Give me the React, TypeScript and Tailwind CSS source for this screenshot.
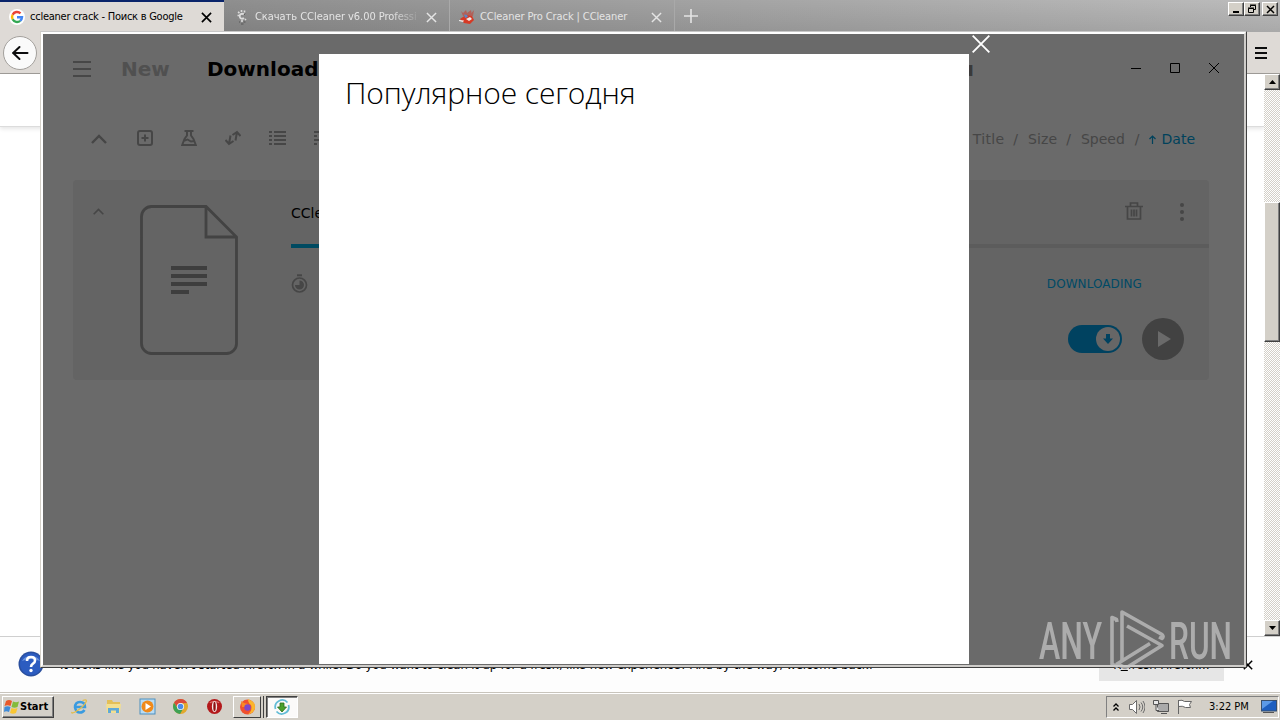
import type { ReactNode } from "react";
import { clsx } from "clsx";

const TAHOMA = "font-['DejaVu_Sans_Condensed','DejaVu_Sans',sans-serif]";

interface IconProps {
  className?: string;
}

function CloseGlyph({ className }: IconProps) {
  return (
    <svg className={className} viewBox="0 0 12 12" fill="none" stroke="currentColor">
      <path d="M1 1l10 10M11 1L1 11" />
    </svg>
  );
}

function ChevronUp({ className }: IconProps) {
  return (
    <svg className={className} viewBox="0 0 16 10" fill="none" stroke="currentColor" strokeWidth="2.4">
      <path d="M1 9l7-7 7 7" />
    </svg>
  );
}

function GoogleIcon() {
  return (
    <svg className="size-4 shrink-0" viewBox="0 0 16 16">
      <circle cx="8" cy="8" r="8" fill="#fff" />
      <g fill="none" strokeWidth="2.4">
        <path d="M11.5 4.3A5 5 0 0 0 3.6 5.7" stroke="#ea4335" />
        <path d="M3.6 5.7a5 5 0 0 0 0 4.6" stroke="#fbbc05" />
        <path d="M3.6 10.3a5 5 0 0 0 7.6 1.5" stroke="#34a853" />
        <path d="M11.2 11.8A5 5 0 0 0 13 8.2H8" stroke="#4285f4" />
      </g>
    </svg>
  );
}

function GearIcon() {
  return (
    <svg className="size-4 shrink-0" viewBox="0 0 16 16" fill="none" stroke="#dcdcdc">
      <path d="M10 5.5A2.500 2.500 0 1 0 10 9" strokeWidth="1.8" />
      <path d="M7.500 1v2M4 3l1.500 1M3.500 6.500h2M10.500 1.500v2M8 11v2M11 10l1 1" strokeWidth="1.6" />
      <path d="M11 4.500l-1 1.500" stroke="#555" />
      <path d="M5 13h1M9.500 13h2M7 15h2.500" stroke="#666" strokeWidth="1.4" />
    </svg>
  );
}

function CCleanerIcon() {
  return (
    <svg className="size-4 shrink-0" viewBox="0 0 16 16">
      <path d="M2 2l2 2 3-3 1 3 4-3 .500 3L15 1l-1 6-4 2-6-2z" fill="#b0625a" />
      <path d="M1 10l6-4 6 1 2 4-4 4-6-1z" fill="#d63a25" />
      <path d="M7 10l4-2 2 2-3 2z" fill="#f2e9e6" />
      <path d="M5 5.500l3 .500 1 2-3 1z" fill="#5d86c4" />
      <path d="M0 11l5 .500L4 13l-4-1z" fill="#efefef" />
    </svg>
  );
}

interface TabProps {
  icon: ReactNode;
  title: string;
  titleClass: string;
  active?: boolean;
}

function BrowserTab({ icon, title, titleClass, active }: TabProps) {
  return (
    <div
      className={clsx(
        "flex h-full shrink-0 items-center pl-[9px]",
        active
          ? "mr-px w-[224px] border-t-2 border-[#0a246a] bg-[#dedad6] text-black"
          : "w-[225px] border-r border-[#a9a9a9] pt-[2px] text-[#e4e4e4]"
      )}
    >
      {icon}
      <span
        className={clsx(
          "ml-[5px] h-4 overflow-hidden whitespace-nowrap text-[11px] leading-4",
          titleClass
        )}
      >
        {title}
      </span>
      <CloseGlyph
        className={clsx(
          "ml-auto size-[11px]",
          active ? "mr-3 stroke-[1.8]" : "mr-3 stroke-[1.6]"
        )}
      />
    </div>
  );
}

function CaptionButton({ children }: { children: ReactNode }) {
  return (
    <div className="flex h-[14px] w-4 items-center justify-center border border-t-white border-l-white border-r-[#404040] border-b-[#404040] bg-[#d4d0c8] shadow-[inset_-1px_-1px_0_#808080]">
      {children}
    </div>
  );
}

function TabBar() {
  return (
    <div className="flex h-8 shrink-0 bg-[linear-gradient(to_bottom,rgba(0,0,0,0),rgba(0,0,0,0.1)),linear-gradient(to_right,#858585,#bcbcbc)]">
      <BrowserTab
        active
        icon={<GoogleIcon />}
        title="ccleaner crack - Поиск в Google"
        titleClass="w-[158px] tracking-[-0.25px]"
      />
      <BrowserTab
        icon={<GearIcon />}
        title="Скачать CCleaner v6.00 Professi"
        titleClass="w-[167px] tracking-[-0.05px] [mask-image:linear-gradient(to_right,#000_82%,transparent)]"
      />
      <BrowserTab
        icon={<CCleanerIcon />}
        title="CCleaner Pro Crack | CCleaner"
        titleClass="w-[166px] tracking-[-0.1px]"
      />
      <svg className="ml-[9px] mt-[9px] size-[14px]" viewBox="0 0 14 14" stroke="#e4e4e4" strokeWidth="1.6">
        <path d="M7 0v14M0 7h14" />
      </svg>
      <div className="ml-auto mr-[2px] mt-[2px] flex">
        <CaptionButton>
          <svg className="size-[10px]" viewBox="0 0 10 10">
            <path d="M2 7h6v2H2z" />
          </svg>
        </CaptionButton>
        <CaptionButton>
          <svg className="size-[10px]" viewBox="0 0 10 10" fill="none" stroke="#000">
            <path d="M3.5 3V1.5h5v4H7M3 1h6M1.5 4.5h5v4h-5zM1 4h6" />
          </svg>
        </CaptionButton>
        <div className="w-[2px]" />
        <CaptionButton>
          <svg className="size-[9px]" viewBox="0 0 9 9" stroke="#000" strokeWidth="1.5">
            <path d="M1 1l7 7M8 1L1 8" />
          </svg>
        </CaptionButton>
      </div>
    </div>
  );
}

function NavBar() {
  return (
    <div className="flex h-[42px] shrink-0 items-center justify-between border-b border-[#9f9c98] bg-[#dedad6] pl-[3px] pr-[13px]">
      <div className="flex size-[34px] items-center justify-center rounded-full border border-[#a3a09c] bg-[#fafafa]">
        <svg className="size-[18px]" viewBox="0 0 18 18" fill="none" stroke="#0c0c0d" strokeWidth="2">
          <path d="M16.500 9H2M8.500 3L2.2 9l6.300 6" strokeLinecap="round" strokeLinejoin="round" />
        </svg>
      </div>
      <svg className="h-3 w-3" viewBox="0 0 12 12" fill="#0c0c0d">
        <path d="M0 0h12v2H0zM0 5h12v2H0zM0 10h12v2H0z" />
      </svg>
    </div>
  );
}

function ScrollButton({ down }: { down?: boolean }) {
  return (
    <div className="flex size-4 items-center justify-center border border-t-white border-l-white border-r-[#404040] border-b-[#404040] bg-[#d4d0c8] shadow-[inset_-1px_-1px_0_#808080]">
      <svg className="h-1 w-[7px]" viewBox="0 0 7 4">
        <path d={down ? "M0 0h7L3.500 4z" : "M0 4h7L3.500 0z"} />
      </svg>
    </div>
  );
}

function Page() {
  return (
    <div className="flex h-[562px] shrink-0 bg-white">
      <div className="flex-1">
        <div className="h-[53px] border-b border-[#dcdcdc] shadow-[0_2px_4px_rgba(0,0,0,0.1)]" />
      </div>
      <div className="flex w-4 flex-col bg-[repeating-conic-gradient(#d4d0c8_0_25%,#fff_0_50%)] bg-[length:2px_2px]">
        <ScrollButton />
        <div className="mt-[112px] h-[140px] border border-t-white border-l-white border-r-[#404040] border-b-[#404040] bg-[#d4d0c8] shadow-[inset_-1px_-1px_0_#808080]" />
        <div className="flex-1" />
        <ScrollButton down />
      </div>
    </div>
  );
}

function InfoBar() {
  return (
    <div className="flex h-14 shrink-0 items-start border-t border-[#cfcfcf] bg-[#fdfdfd] text-[13px]">
      <svg className="ml-[18px] mt-[14px] size-[26px] shrink-0" viewBox="0 0 26 26">
        <circle cx="13" cy="13" r="12.500" fill="#2a4f9e" />
        <circle cx="13" cy="13" r="11" fill="#2c5cc0" />
        <path d="M4 10a10 9 0 0 1 18 0q-9-4-18 0z" fill="#6f95dc" />
        <path d="M9 10q0-4 4-4t4 3.500q0 2-2 3.200T13 16" fill="none" stroke="#fff" strokeWidth="2.600" />
        <circle cx="13" cy="19.500" r="1.700" fill="#fff" />
      </svg>
      <span className="ml-4 mt-5 w-[830px] shrink-0 whitespace-nowrap leading-4 tracking-[-0.14px]">
        It looks like you haven't started Firefox in a while. Do you want to clean it up for a fresh, like-new
        experience? And by the way, welcome back!
      </span>
      <div className="ml-[209px] mt-4 h-7 w-[125px] shrink-0 whitespace-nowrap bg-[#e6e6e6] pt-1 text-center leading-4 tracking-[-0.1px]">
        R<u>e</u>fresh Firefox…
      </div>
      <CloseGlyph className="ml-[19px] mt-[23px] size-[10px] shrink-0 stroke-[1.800]" />
    </div>
  );
}

function WindowControls() {
  return (
    <div className="mt-7 flex items-center gap-[27px] text-black">
      <svg className="h-3 w-3" viewBox="0 0 12 12" stroke="currentColor">
        <path d="M1 6.500h10" />
      </svg>
      <svg className="h-3 w-3" viewBox="0 0 12 12" fill="none" stroke="currentColor">
        <path d="M1.500 1.500h9v9h-9z" />
      </svg>
      <CloseGlyph className="h-3 w-3" />
    </div>
  );
}

function Toolbar() {
  return (
    <div className="flex h-5 items-center text-[#464646]">
      <ChevronUp className="h-[10px] w-4" />
      <svg className="mb-[2px] ml-[30px] size-4" viewBox="0 0 16 16" fill="none" stroke="currentColor" strokeWidth="2">
        <rect x="1" y="1" width="14" height="14" rx="2" />
        <path d="M8 4.500v7M4.500 8h7" />
      </svg>
      <svg className="mb-[2px] ml-7 size-4" viewBox="0 0 16 16" fill="none" stroke="currentColor" strokeWidth="1.900">
        <path d="M3.500 1h9M6 1v4.500L3.500 9 1.200 15h13.600L12.500 9 10 5.500V1M3 11l3.500-1.500L10 11.500l3-.500" />
      </svg>
      <svg className="mb-[2px] ml-7 size-4" viewBox="0 0 16 16" fill="none" stroke="currentColor" strokeWidth="2">
        <path d="M5.500 5.500L4 14M.500 10l3.500 4 4.500-3" />
        <path d="M12 2l-1.500 8.500M7.500 5L12 2l3.500 4" />
      </svg>
      <svg className="mb-[2px] ml-7 h-4 w-[17px]" viewBox="0 0 17 16" fill="currentColor">
        <path d="M0 1h3v2H0zM5 1h12v2H5zM0 5h3v2H0zM5 5h12v2H5zM0 9h3v2H0zM5 9h12v2H5zM0 13h3v2H0zM5 13h12v2H5z" />
      </svg>
      <svg className="mb-[2px] ml-7 h-4 w-[17px]" viewBox="0 0 17 16" fill="currentColor">
        <path d="M0 1h5v2H0zM0 5h3v2H0zM0 9h5v2H0zM0 13h3v2H0z" />
      </svg>
      <div className="ml-auto flex items-center whitespace-nowrap text-sm leading-5">
        <span className="tracking-[0.3px]">Title</span>
        <span className="ml-[9px]">/</span>
        <span className="ml-[10px] tracking-[0.1px]">Size</span>
        <span className="ml-[9px]">/</span>
        <span className="ml-[10px]">Speed</span>
        <span className="ml-[10px]">/</span>
        <svg className="ml-[9px] h-[9px] w-[7px]" viewBox="0 0 7 9" fill="none" stroke="#00425c" strokeWidth="1.200">
          <path d="M3.500 9V1M.500 4l3-3 3 3" />
        </svg>
        <span className="ml-[6px] text-[#00425c]">Date</span>
      </div>
    </div>
  );
}

function DownloadCard() {
  return (
    <div className="flex h-[200px] rounded-sm bg-[#646464] text-[#464646]">
      <ChevronUp className="ml-5 mt-7 h-[7px] w-[11px]" />
      <svg className="ml-[36px] mt-[25px] h-[150px] w-[98px] shrink-0" viewBox="0 0 98 150" fill="none" stroke="#434343" strokeWidth="2.800">
        <path d="M66 1.500H11.500a10 10 0 0 0-10 10v127a10 10 0 0 0 10 10h75a10 10 0 0 0 10-10V32L66 1.500zV32h30.500" />
        <path d="M31 63h36M31 71h36M31 79h36M31 87h18" strokeWidth="4" stroke="#3e3e3e" />
      </svg>
      <div className="ml-[53px] flex min-w-0 flex-1 flex-col">
        <div className="flex h-16 items-center">
          <span className="mt-[2px] text-sm text-black">CCleaner</span>
          <svg className="mb-[2px] ml-auto h-[18px] w-[18px]" viewBox="0 0 18 18" fill="none" stroke="currentColor" strokeWidth="1.700">
            <path d="M0 4.500h18M5.500 4V1h7v3M2.500 5v12h13V5M6.500 7.500v7M9 7.500v7M11.500 7.500v7" />
          </svg>
          <svg className="ml-[37px] mr-[25px] h-[18px] w-1" viewBox="0 0 4 18" fill="currentColor">
            <circle cx="2" cy="2" r="2" />
            <circle cx="2" cy="9" r="2" />
            <circle cx="2" cy="16" r="2" />
          </svg>
        </div>
        <div className="h-1 bg-[#5c5c5c]">
          <div className="h-full w-20 bg-[#004a61]" />
        </div>
        <div className="mt-[25px] flex h-5 items-center">
          <svg className="h-[19px] w-[17px]" viewBox="0 0 17 19" fill="none" stroke="currentColor" strokeWidth="1.700">
            <circle cx="8.500" cy="11" r="7" />
            <path d="M6 1.300h5" strokeWidth="2" />
            <path d="M8.500 6.500V11H4a4.500 4.500 0 1 0 4.500-4.500z" fill="currentColor" stroke="none" />
          </svg>
          <span className="ml-auto mr-[67px] mt-[2px] text-xs tracking-[0.08px] text-[#004a66]">DOWNLOADING</span>
        </div>
        <div className="mt-[25px] flex items-center justify-end pr-[25px]">
          <div className="flex h-7 w-[54px] items-center justify-end rounded-full bg-[#004260] pr-[2px]">
            <div className="flex size-6 items-center justify-center rounded-full bg-[#666]">
              <svg className="h-[10px] w-[10px]" viewBox="0 0 10 10" fill="#004260">
                <path d="M3 0h4v4.500h3L5 10 0 4.500h3z" />
              </svg>
            </div>
          </div>
          <div className="ml-5 flex size-[42px] items-center justify-center rounded-full bg-[#424242]">
            <svg className="ml-[3px] h-4 w-[13px]" viewBox="0 0 13 16" fill="#6a6a6a">
              <path d="M0 0l13 8-13 8z" />
            </svg>
          </div>
        </div>
      </div>
    </div>
  );
}

function DownloaderWindow() {
  return (
    <div className="absolute left-10 top-[31px] h-[637px] w-[1207px] border border-t-[#c8c8c8] border-l-[#d4d0c8] border-r-[#404040] border-b-[#404040]">
      <div className="h-full border-2 border-t-white border-l-white border-r-[#cfcdca] border-b-[#cfcdca]">
        <div className="relative h-full overflow-hidden bg-[#6a6a6a] font-['DejaVu_Sans',sans-serif]">
          <div className="flex h-[95px] items-start pl-[30px] pr-[24px]">
            <svg className="mt-[27px] h-4 w-[18px]" viewBox="0 0 18 16" stroke="#3c3c3c" strokeWidth="1.600">
              <path d="M0 1h18M0 8h18M0 15h18" />
            </svg>
            <span className="ml-[30px] mt-[21px] w-[50px] shrink-0 text-xl font-bold text-[#505050]">New</span>
            <span className="ml-9 mt-[21px] w-[130px] shrink-0 text-xl font-bold text-black">Downloads</span>
            <span className="ml-[577px] mt-[21px] w-[60px] shrink-0 text-right text-xl font-bold text-[#3a3a3a]">u</span>
            <div className="ml-auto">
              <WindowControls />
            </div>
          </div>
          <div className="pl-12 pr-[49px]">
            <Toolbar />
          </div>
          <div className="mt-[31px] pl-[30px] pr-[35px]">
            <DownloadCard />
          </div>
          <div className="absolute bottom-px left-[276px] top-5 w-[650px] bg-white pl-[26px] pt-[18px]">
            <h1 className="font-['Open_Sans',sans-serif] text-[30px] font-light leading-[42px] tracking-[-0.12px] text-black">
              Популярное сегодня
            </h1>
          </div>
          <CloseGlyph className="absolute left-[928px] top-0 size-5 stroke-[1.100] text-white" />
        </div>
      </div>
    </div>
  );
}

function Watermark() {
  return (
    <svg className="absolute left-[1036px] top-[608px] h-16 w-[200px] opacity-70" viewBox="0 0 200 64" fill="#c9c9c9">
      <g fontFamily="Roboto, sans-serif" fontSize="51" fontWeight="500">
        <text x="3" y="51" textLength="63" lengthAdjust="spacingAndGlyphs">ANY</text>
        <text x="133" y="51" textLength="63" lengthAdjust="spacingAndGlyphs">RUN</text>
      </g>
      <g fill="none" stroke="#c9c9c9" strokeWidth="3.600" strokeLinejoin="round">
        <path d="M81 14l-.500-2.500L76 9.500V56l6 3" />
        <path d="M86 53V4l40 22.500q2 2 0 4l-3-1.500" />
        <path d="M91 18l35 19.500L90 60l-9-4 33-20.500" />
      </g>
    </svg>
  );
}

function Taskbar() {
  return (
    <div className="flex h-7 shrink-0 items-center border-t border-[#c8c4bc] bg-[#d4d0c8] pl-[2px] shadow-[inset_0_1px_0_#fff]">
      <div className="flex h-[22px] w-[52px] items-center border border-t-white border-l-white border-r-[#404040] border-b-[#404040] pl-[1px] shadow-[inset_-1px_-1px_0_#808080]">
        <svg className="size-4 shrink-0" viewBox="0 0 16 16">
          <path d="M2 2q3-2 6 0L6.500 7q-3-1.500-6 0z" fill="#e8582a" />
          <path d="M9 2.500q3 1.500 6 0L13.500 8q-3 1.500-6 0z" fill="#83bb3c" />
          <path d="M.500 8q3-1.500 6 0L5 13q-3-1.500-5 0z" fill="#3f8bd8" />
          <path d="M7.500 9q3 1.500 6 0L12 14q-3 1.500-6 0z" fill="#f9c632" />
        </svg>
        <span className="mt-px text-[11px] font-bold">Start</span>
      </div>
      <div className="ml-[17px] flex items-center gap-[17px]">
        <svg className="size-[17px]" viewBox="0 0 17 17" fill="none">
          <path d="M4 9h10q0-5-5-5T4 9.500q1 5 5 5 3 0 4.500-2.500" stroke="#3a9be0" strokeWidth="2.500" />
          <path d="M1 14Q0 16 4 14 13 9 15.500 3q0-2-4-.5" stroke="#e2bd4a" strokeWidth="1.300" />
        </svg>
        <svg className="size-[17px]" viewBox="0 0 17 17">
          <path d="M2 2h5l1 2h7v10H2z" fill="#e3bf58" />
          <path d="M1 6h15l-1 9H2z" fill="#f3df90" />
          <path d="M3 15v-5h11v5h-3v-2.500H6V15z" fill="#5fa9d8" />
        </svg>
        <svg className="size-[17px]" viewBox="0 0 17 17">
          <rect x="1" y="1" width="15" height="15" fill="#b9dcf4" stroke="#4d8fbe" />
          <circle cx="8.500" cy="8.500" r="6" fill="#f08a1a" />
          <path d="M6.500 5v7l5.500-3.500z" fill="#fff" />
        </svg>
        <svg className="size-[15px]" viewBox="0 0 16 16">
          <circle cx="8" cy="8" r="8" fill="#e2a92e" />
          <path d="M1.100 4A8 8 0 0 1 15 4.200L8 4.500 5 9z" fill="#d94a3c" />
          <path d="M1.100 4A8 8 0 0 0 7.500 16l3.500-6H5z" fill="#3ea155" />
          <circle cx="8" cy="8" r="3.800" fill="#fff" />
          <circle cx="8" cy="8" r="3" fill="#4b8be8" />
        </svg>
        <svg className="ml-[2px] size-[15px]" viewBox="0 0 16 16">
          <circle cx="8" cy="8" r="8" fill="#b3191b" />
          <path d="M3 4a8 6 0 0 1 10 0" stroke="#dd6a67" strokeWidth="1.500" fill="none" />
          <ellipse cx="8" cy="8" rx="2.800" ry="6" fill="#f2e7e6" />
          <ellipse cx="8" cy="8" rx="1.300" ry="5" fill="#8f1012" />
        </svg>
      </div>
      <div className="ml-[11px] flex h-[22px] w-[28px] items-center justify-center border border-t-white border-l-white border-r-[#404040] border-b-[#404040]">
        <svg className="size-[17px]" viewBox="0 0 17 17">
          <circle cx="8.500" cy="9" r="7.500" fill="#f0512e" />
          <path d="M9 1q8 3 7 9-1 5-7 6.500Q14 12 12 7 9 5 9 1z" fill="#fbb52c" />
          <path d="M2 3l3 2 4 1-2 3H3z" fill="#f98a24" />
          <circle cx="8.500" cy="9.500" r="3.200" fill="#7d48c8" />
        </svg>
      </div>
      <div className="h-[22px] w-[3px] border-r border-[#404040] bg-[#d4d0c8]" />
      <div className="ml-[2px] flex h-[22px] w-[32px] items-center justify-center border border-t-[#404040] border-l-[#404040] border-r-white border-b-white bg-[#fbfaf9] shadow-[inset_1px_1px_0_#808080]">
        <svg className="size-4" viewBox="0 0 16 16" fill="none">
          <path d="M13.500 3.500A7 7 0 0 0 1.500 10M2.500 12.500A7 7 0 0 0 14.500 6" stroke="#63bcd6" strokeWidth="1.800" />
          <path d="M6 4h4v4h2.500L8 13 3.500 8H6z" fill="#4aa02c" stroke="#2a6c1c" strokeWidth=".800" />
        </svg>
      </div>
      <div className="ml-auto mr-[1px] flex h-[22px] w-[173px] items-center border border-t-[#808080] border-l-[#808080] border-r-white border-b-white pl-[6px]">
        <svg className="h-2 w-[6px]" viewBox="0 0 6 8" fill="none" stroke="#000" strokeWidth="1.300">
          <path d="M.500 3.500L3 1l2.500 2.500M.500 7.500L3 5l2.500 2.500" />
        </svg>
        <svg className="ml-[10px] size-4" viewBox="0 0 16 16" stroke="#6b6b6b" fill="#fff">
          <path d="M.500 5.500h3l4-4v13l-4-4h-3z" />
          <path d="M10 5q2 3 0 6M12 3.500q3.500 4.500 0 9M14 2q4 6 0 12" fill="none" />
        </svg>
        <svg className="ml-2 size-4" viewBox="0 0 16 16" fill="#e8e8e8" stroke="#555">
          <path d="M4.500 4.500h11v8h-11z" fill="#aaa" />
          <path d="M8 14.500h6" />
          <path d="M.500 1.500h5v4h-5zM3 5.500v6h3" />
        </svg>
        <svg className="ml-2 size-4" viewBox="0 0 16 16" fill="#fff" stroke="#666">
          <path d="M1.500 1v14M1.500 1.500q4-1 6 1h7l-2 3 1 3h-5q-3-2-7-1z" />
        </svg>
        <span className="ml-4 mt-[2px] whitespace-nowrap text-[11px]">3:22 PM</span>
        <svg className="ml-auto mr-[1px] h-[13px] w-4 shrink-0" viewBox="0 0 16 13">
          <rect x=".500" y=".500" width="15" height="10.500" fill="#1d5fc0" stroke="#38506e" />
          <path d="M1 1h11L1 9z" fill="#5b9ae8" />
          <path d="M2 12.500h11" stroke="#555" />
        </svg>
      </div>
    </div>
  );
}

export default function App() {
  return (
    <div className={clsx("relative flex h-[720px] w-[1280px] flex-col overflow-hidden bg-white text-black", TAHOMA)}>
      <TabBar />
      <NavBar />
      <Page />
      <InfoBar />
      <Taskbar />
      <DownloaderWindow />
      <Watermark />
    </div>
  );
}
